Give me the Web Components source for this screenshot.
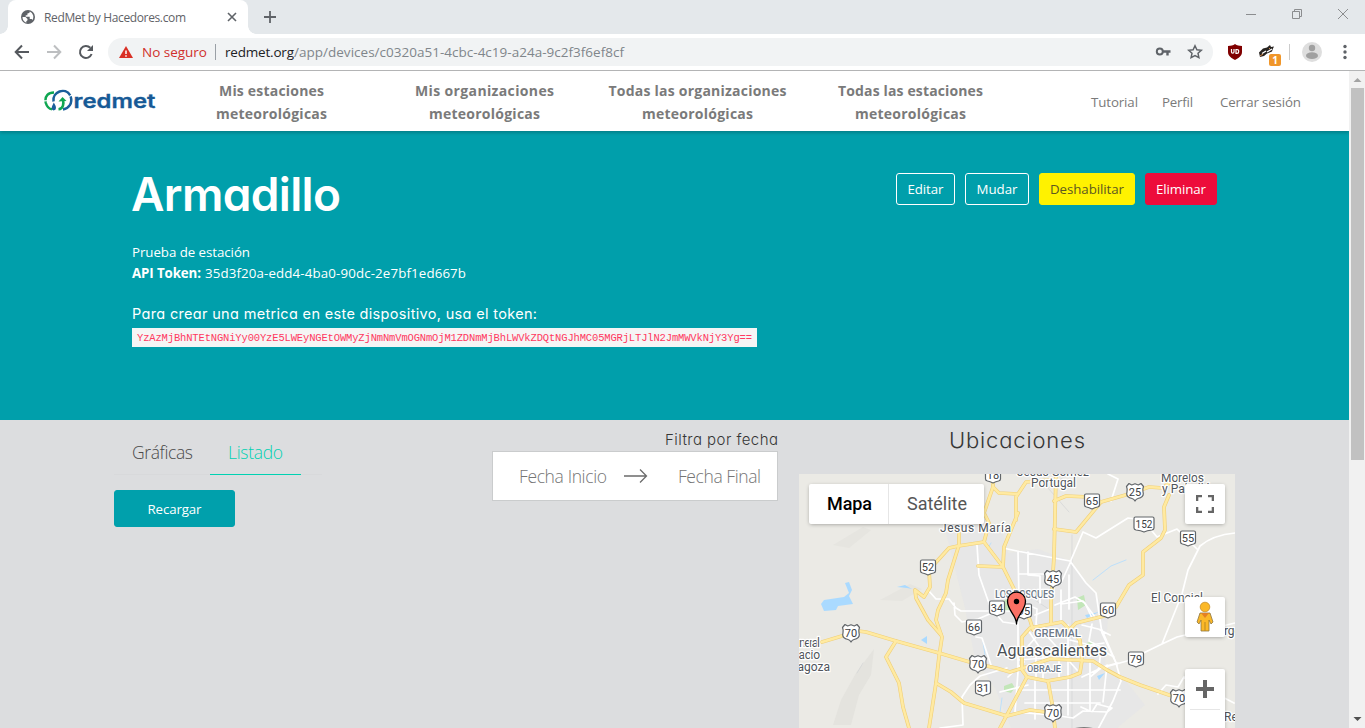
<!DOCTYPE html>
<html lang="es">
<head>
<meta charset="utf-8">
<title>RedMet by Hacedores.com</title>
<style>
html,body{margin:0;height:100%;overflow:hidden}
body{font-family:"Open Sans","Noto Sans",sans-serif}
</style>
</head>
<body>
<browser-window></browser-window>
<script>
function define(name, html, setup){
  const t=document.createElement('template');
  t.innerHTML=html;
  customElements.define(name, class extends HTMLElement{
    constructor(){super();this.attachShadow({mode:'open'}).append(t.content.cloneNode(true));}
    connectedCallback(){ if(setup) setup(this,this.shadowRoot); }
  });
}

define('tab-strip', `<style>
:host{display:flex;height:34px;background:#e4e8eb;align-items:stretch;font-size:12px;color:#5f6368}
.tab{box-sizing:border-box;margin-left:8px;width:240px;background:#fff;border-radius:8px 8px 0 0;display:flex;align-items:center;padding:0 10px 0 12px;gap:8px;position:relative}
.tab::before,.tab::after{content:"";position:absolute;bottom:0;width:8px;height:8px}
.tab::before{left:-8px;background:radial-gradient(circle at 0 0,transparent 7.500px,#fff 8px)}
.tab::after{right:-8px;background:radial-gradient(circle at 100% 0,transparent 7.500px,#fff 8px)}
.tab fit-text{flex:none;margin-right:auto}
.plus{align-self:center;margin-left:15px}
.win{margin-left:auto;display:flex;gap:34px;padding:8px 16px 0 0}
svg{display:block}
</style>
<div class="tab"><svg width="16" height="16" viewBox="0 0 16 16"><circle cx="8" cy="8" r="7" fill="#5f6368"/><path d="M2.5 8h3l2 2v1.2l-1.2 1v1.6A6 6 0 0 1 2.500 8zM9.800 2.500c-.2 1.500-1 1.800-2.400 2v1.700H5.700v1.600h4v2.200h1.400c1 0 1.200.6 1.200 1.300A6 6 0 0 0 9.800 2.500z" fill="#fff"/></svg>
<fit-text w="142">RedMet by Hacedores.com</fit-text>
<svg width="12" height="12" viewBox="0 0 12 12"><path d="M2 2l8 8M10 2l-8 8" stroke="#5f6368" stroke-width="1.6"/></svg></div>
<svg class="plus" width="14" height="14"><path d="M7 1v12M1 7h12" stroke="#5f6368" stroke-width="1.8"/></svg>
<div class="win"><svg width="12" height="12"><path d="M1 6.500h10" stroke="#8b8d8f"/></svg>
<svg width="12" height="12"><path d="M1.500 3.500h7v7h-7zM3.500 3V1.500h7v7H9" stroke="#8b8d8f" fill="none"/></svg>
<svg width="12" height="12"><path d="M1 1l10 10M11 1L1 11" stroke="#8b8d8f"/></svg></div>`);

define('address-bar', `<style>
:host{display:flex;box-sizing:border-box;height:37px;border-bottom:1px solid #b3b4b5;background:#fff;align-items:center;padding:0 12px 0 14px;font-size:13.500px}
svg{display:block;flex:none}
.nav{display:flex;gap:16px;margin-right:14px}
.box{display:flex;align-items:center;width:1105px;height:28px;box-sizing:border-box;border-radius:14px;background:#f1f3f4;padding:0 10px}
.box .w{margin-right:8px}
.red{color:#d0302b}.host{color:#202124}.path{color:#80868b;margin-right:auto}
i{width:1px;height:16px;background:#9aa0a6;margin:0 9px 0 8px}
.tools{display:flex;align-items:center;margin-left:13px}
.tools i{background:#ccc;margin:0 12px 0 9px}
.badge{position:relative}
.badge b{position:absolute;left:11px;top:10px;width:12px;height:12px;border-radius:2px;background:#f0962a;color:#fff;font:bold 10px/12px "Open Sans",sans-serif;text-align:center}
</style>
<div class="nav">
<svg width="16" height="16"><path d="M15 8H2M8 1.500L1.700 8 8 14.500" fill="none" stroke="#55595e" stroke-width="2"/></svg>
<svg width="16" height="16"><path d="M1 8h13M8 1.500L14.300 8 8 14.500" fill="none" stroke="#bdbfc1" stroke-width="2"/></svg>
<svg width="16" height="16"><path d="M13.600 10A6 6 0 1 1 12.300 3.800" fill="none" stroke="#55595e" stroke-width="2"/><path d="M15 1v6H9z" fill="#55595e"/></svg></div>
<div class="box"><svg class="w" width="16" height="16"><path d="M8 2l7 12H1z" fill="#d93025"/><path d="M8 6.500v3.500M8 11.200v1.600" stroke="#fff" stroke-width="1.500"/></svg>
<fit-text class="red" w="65">No seguro</fit-text><i></i><fit-text class="host" w="69">redmet.org</fit-text><fit-text class="path" w="330">/app/devices/c0320a51-4cbc-4c19-a24a-9c2f3f6ef8cf</fit-text>
<svg width="16" height="16" style="margin-right:16px"><circle cx="4.800" cy="7.500" r="3" fill="none" stroke="#5f6368" stroke-width="2"/><path d="M8 7.500h7.500M12.500 7v4.500" stroke="#5f6368" stroke-width="2.400"/></svg>
<svg width="16" height="16"><path d="M8 1.800l1.900 4 4.400.5-3.300 3 .9 4.300L8 11.500l-3.900 2.100.9-4.300-3.300-3 4.400-.5z" fill="none" stroke="#5f6368" stroke-width="1.500"/></svg></div>
<div class="tools"><svg width="18" height="18" style="margin-right:14px"><path d="M9 1c2 1.500 4 1.800 7 2v6c0 4-3.500 6-7 8-3.500-2-7-4-7-8V3c3-.2 5-.5 7-2z" fill="#800000"/><path d="M5.500 6v3q0 1.200 1.200 1.200T8 9V6M10 6.500v3.800h1q1.700 0 1.700-1.900T11 6.500z" fill="none" stroke="#fff" stroke-width="1.200"/></svg>
<div class="badge"><svg width="22" height="16"><path d="M1 8.500l4-4 4-1 3-2.500 1 2 3-.5-1 2-1 3-5 2-3 2.500-4 1z" fill="#272320"/><path d="M4 9.500l4-2.500M9 8l5-3" stroke="#fff" stroke-width="1.400"/><path d="M2 12l3-2M11 5l1-1" stroke="#d38a50"/></svg><b>1</b></div>
<i></i><svg width="20" height="20"><circle cx="10" cy="10" r="10" fill="#dedede"/><circle cx="10" cy="6" r="3.200" fill="#a0a0a0"/><ellipse cx="10" cy="13.700" rx="6" ry="3.400" fill="#a0a0a0"/></svg>
<svg width="4" height="16" style="margin-left:21px"><circle cx="2" cy="2.500" r="1.700" fill="#5f6368"/><circle cx="2" cy="8" r="1.700" fill="#5f6368"/><circle cx="2" cy="13.500" r="1.700" fill="#5f6368"/></svg></div>`);

define('site-logo', `<style>:host{display:block}svg{display:block}text{font:600 19px Inter,sans-serif;font-feature-settings:"cv11"}</style>
<svg width="112" height="24" viewBox="44 89 112 24"><g fill="none" stroke-width="2.500">
<path d="M54 92.500C46.500 92.500 44.500 98 45.800 103 47 107 49.500 109 52 109.300" stroke="#0fa651" stroke-dasharray="13 1.200"/>
<path d="M53.500 101.500C52 91.500 66 86.500 70.500 96 73 103 69 108.500 63 109.500" stroke="#1b5f9b" stroke-dasharray="25 1"/>
<path d="M58.500 109.300C63.500 109 64 103 62.800 99" stroke="#0fa651"/></g>
<path d="M58.500 101.500l4-4.500 4 4z" fill="#0fa651"/><path d="M53.800 102.500q4.500 7-.2 8-4-.5.200-8z" fill="#1b5f9b"/>
<text x="73.500" y="107.800" fill="#175a96" stroke="#175a96" stroke-width=".3" textLength="82" lengthAdjust="spacingAndGlyphs">redmet</text></svg>`);

define('site-nav', `<style>
:host{display:flex;height:60px;background:#fff;align-items:center;position:relative;box-shadow:0 2px 3px rgba(10,10,10,.2);z-index:1;color:#7a7a7a}
site-logo{margin:0 9px 0 44px}
.item{width:213px;text-align:center;font:bold 14px/23px "Open Sans",sans-serif;padding-top:2px}
.item fit-text{margin:auto;display:block}
.end{margin-left:auto;display:flex;font-size:13.300px;padding:2px 48px 0 0}
</style>
<site-logo></site-logo>
<div class="item"><fit-text w="105">Mis estaciones</fit-text><fit-text w="111">meteorológicas</fit-text></div>
<div class="item"><fit-text w="139">Mis organizaciones</fit-text><fit-text w="111">meteorológicas</fit-text></div>
<div class="item"><fit-text w="178">Todas las organizaciones</fit-text><fit-text w="111">meteorológicas</fit-text></div>
<div class="item"><fit-text w="145">Todas las estaciones</fit-text><fit-text w="111">meteorológicas</fit-text></div>
<div class="end"><fit-text w="47" style="margin-right:24px">Tutorial</fit-text><fit-text w="31" style="margin-right:27px">Perfil</fit-text><fit-text w="81">Cerrar sesión</fit-text></div>`);

define('ui-button', `<style>
:host{display:flex;box-sizing:border-box;height:32px;border-radius:3px;border:1px solid #fff;align-items:center;justify-content:center;color:#fff;font-size:13.300px;width:var(--w)}
:host([kind=warning]){background:#fff200;border-color:#fff200;color:#5c5820}
:host([kind=danger]){background:#ed0c3b;border-color:#ed0c3b}
:host([kind=primary]){background:#00a0ac;border-color:#00a0ac;height:37px}
</style><slot></slot>`);

define('station-hero', `<style>
:host{display:flex;box-sizing:border-box;height:289px;background:#009fab;color:#fff;padding:42px 132px 0;justify-content:space-between;align-items:flex-start;font-size:13.300px;line-height:21px}
h1{margin:0 0 25px -1px;font:600 46px/43px Inter,sans-serif;padding-bottom:1px;font-feature-settings:"cv11"}
h2{margin:20px 0 4px;font:400 14.500px/20px Inter,sans-serif;font-feature-settings:"cv11"}
.row{display:flex}
.code{background:#f5f5f5;color:#ff3860;height:19px;width:625px;box-sizing:border-box;padding-left:5px;font:10.500px/20px "Liberation Mono",monospace}
.buttons{display:flex;gap:10px}
</style>
<div><h1><fit-text w="210">Armadillo</fit-text></h1>
<div class="row"><fit-text w="118">Prueba de estación</fit-text></div>
<div class="row"><b><fit-text w="69">API Token:</fit-text></b><fit-text w="261" style="margin-left:4px">35d3f20a-edd4-4ba0-90dc-2e7bf1ed667b</fit-text></div>
<h2><fit-text w="405">Para crear una metrica en este dispositivo, usa el token:</fit-text></h2>
<div class="code"><fit-text w="615">YzAzMjBhNTEtNGNiYy00YzE5LWEyNGEtOWMyZjNmNmVmOGNmOjM1ZDNmMjBhLWVkZDQtNGJhMC05MGRjLTJlN2JmMWVkNjY3Yg==</fit-text></div></div>
<div class="buttons"><ui-button style="--w:59px"><fit-text w="36">Editar</fit-text></ui-button><ui-button style="--w:64px"><fit-text w="41">Mudar</fit-text></ui-button><ui-button kind="warning" style="--w:96px"><fit-text w="74">Deshabilitar</fit-text></ui-button><ui-button kind="danger" style="--w:72px"><fit-text w="50">Eliminar</fit-text></ui-button></div>`);

define('view-tabs', `<style>
:host{display:block;width:208px}
.tabs{display:flex;height:54px;border-bottom:1px solid #d8d9db;font-size:17.500px;line-height:65px;color:#4a4a4a;font-weight:300}
.t{padding:0 18px;height:54px}.on{color:#00d1b2;border-bottom:1px solid #00d1b2}
ui-button{margin-top:15px}
</style><div class="tabs"><div class="t"><fit-text w="61">Gráficas</fit-text></div><div class="t on" style="margin-left:-1px"><fit-text w="55">Listado</fit-text></div></div>
<ui-button kind="primary" style="--w:121px"><fit-text w="54">Recargar</fit-text></ui-button>`);

define('date-filter', `<style>
:host{display:flex;flex-direction:column;align-items:flex-end;width:286px}
.l{font:300 15px/20px Inter,sans-serif;font-feature-settings:"cv11";color:#363636;margin:10px 0 1px}
.box{display:flex;align-items:center;box-sizing:border-box;width:286px;height:50px;border:1px solid #cacccd;background:#fff;padding:0 16px 0 26px;font-size:17.500px;color:#757575;font-weight:300}
</style><div class="l"><fit-text w="113">Filtra por fecha</fit-text></div>
<div class="box"><fit-text w="88">Fecha Inicio</fit-text><svg width="24" height="16" style="margin:0 30px 0 17px"><path d="M0 8h22M16 1.500L22.500 8 16 14.500" fill="none" stroke="#6b6b6b" stroke-width="1.300"/></svg><fit-text w="83">Fecha Final</fit-text></div>`);

define('map-view', `<style>
:host{display:block;position:relative;width:436px;height:254px;overflow:hidden;background:#ebeae5;font-family:Roboto,sans-serif}
svg{display:block}
.c{position:absolute;background:#fff;border-radius:2px;box-shadow:0 1px 4px -1px rgba(0,0,0,.4);display:flex;align-items:center;justify-content:center}
.type{left:10px;top:10px;height:40px;width:175px;font-size:18px;color:#565656;justify-content:flex-start}
.type div{height:40px;display:flex;align-items:center;box-sizing:border-box;padding:0 18px 1px}
.type .a{width:80px;color:#000;font-weight:500;border-right:1px solid #e6e6e6}
.full{left:386px;top:10px;width:40px;height:40px}
.peg{left:386px;top:123px;width:40px;height:40px}
.zoom{left:386px;top:195px;width:40px;height:81px;align-items:flex-start}
.lb text{paint-order:stroke;stroke:#fff;stroke-width:2.500px;stroke-linejoin:round;fill:#50555b;font-size:12px}
.lb .big{font-size:16px;fill:#4a4f55}.lb .d{font-weight:500;fill:#6e7a89;font-size:10.500px}
.sh text{font:11px Roboto,sans-serif;fill:#3c4043;text-anchor:middle}
</style>
<svg width="436" height="254" viewBox="799 474 436 254" fill="none" stroke-linecap="round" stroke-linejoin="round">
<g fill="#e5e6e7"><path d="M946 533l45-10 12 10 5 20 30-4 30 11 28 35 12 20-3 50 20 15 20 25-40 33h-90l-20-50-20-30-10-50z" opacity=".75"/><path d="M856 673l18-24-3 26-12 20-8 30h-18l8-25z" fill="#e4e3de"/><path d="M833 545l30-18 8 3-22 18zM880 600l30-16 12 5-20 12z" fill="#e6e5e0"/></g>
<path d="M1068 474l-20 14 21 24M1072 535v200M1035 600l15 10M857 673l6-10" stroke="#d3d4d5" stroke-width=".7"/>
<g fill="#aadaff"><path d="M821 604l3-4 20-3 5-4-4-10 4-1 3 8-3 6 4 8-15 2-2 4-12 1zM897 587l8-2 7 4-5-1zM921 640l6-4v8zM1085 615l14-3-12 6zM1097 676l8-3-6 7z"/></g><path d="M1093 580l18-14 15-6M991 543l-3 5M1000 712l2-14M985 655l-2-13" stroke="#bde0fb"/>
<g fill="#c2e6b8"><path d="M1077 598l7-3 2 10-8 5zM1084 644l8-3 3 4-8 1zM1004 686l8-3 3 5-4 5-7-2zM1003 601l6-3v13h-5z"/></g>
<g stroke="#fff" stroke-width="1.700">
<path d="M977 545l2 30 12 34 12 2h14M928 590l8 9 13 0 7 9 5 3h47M954 603l1 12 7 7 16-3 14-6 5 2 6 7 14 2M976 637l6 1 10 30M940 728l23-3-1-28 8-12 10-9 27-8M1003 548l14 3 53 10 16 22 10 10 6 40 14 30 5 18-8 20-16 30M1071 560l12-28 13 6 32-20 15 2 14 17 20-8 20 20M1235 533q-22 2-35 13M1200 546l-12 24-6 24-20 50-35 17-29 8M1162 644l15-7 58-14M1158 694l8-9 12 2 6-10 50 26M1108 474l10 5-7 22M1061 583l10-22M1018 551l1 50 18 8-1 16M1028 552v23l12 1v27M1019 574h34l1 20M1061 604l22-3 12 16M1018 622v50l-3 40 38 3 20 3 10-7 24 1 5-4-15-4-5 8-11-5"/>
<path d="M1037 625l18 20 22 25M1028 630l20 30M1035 681v38M1044 628l-22 25M1022 690h98M1025 703h75M1068 625v90M1090 660v50M1107 665l-4 37M1070 640l20 5 14-2M1068 648l24-3 22 12M1082 625l20 5 15 35M1092 624l-3 17 12 6-2 22-17 8M1100 630l10 5M1090 677l12-10 16-4M1018 660l40-3M1025 650l50 4M1008 677l16-15M1000 692l28-7M1061 590v30M1069 575v34M1055 605l20-8 10 6 8 17M1036 650v29M1043 650v29M1059 660v17M1050 609l-15 6"/></g>
<g id="roads"></g>
<g class="lb"><text x="1017" y="475.500" textLength="72">Jesús Gómez</text><text x="1031" y="487" textLength="45">Portugal</text><text x="1161" y="481.500" textLength="43">Morelos</text><text x="1162" y="493">y Pabellón</text><text x="940" y="531.500" textLength="71">Jesús María</text><text x="1151" y="601.500" textLength="52">El Conejal</text><text x="787" y="647" textLength="33">General</text><text x="783" y="659" textLength="37">Ignacio</text><text x="780" y="671">Zaragoza</text><text x="1199" y="634.500">Amargo</text><text x="1224" y="721">Rey</text>
<text class="d" x="995" y="598" textLength="59" style="font-size:10px">LOS BOSQUES</text><text class="d" x="1034" y="637" textLength="47" style="font-size:11.500px">GREMIAL</text><text class="d" x="1027" y="671.500" textLength="34" lengthAdjust="spacingAndGlyphs" style="font-size:9.500px">OBRAJE</text><text class="big" x="997" y="656" textLength="110">Aguascalientes</text></g>
<g class="sh"></g>
<path d="M1016.500 624c0-9-9-13-9-23a9 9 0 0 1 18 0c0 10-9 14-9 23z" fill="#fb7064" stroke="#000" stroke-width="1.300"/><circle cx="1016.500" cy="601.500" r="2.700" fill="#000"/>
<path d="M1075 728q9-1.500 18 0z" fill="#555"/>
</svg>
<div class="c type"><div class="a"><fit-text w="45">Mapa</fit-text></div><div><fit-text w="60">Satélite</fit-text></div></div>
<div class="c full"><svg width="18" height="18"><path d="M1 6V1H6M12 1h5V6M17 12v5H12M6 17H1V12" fill="none" stroke="#666" stroke-width="2.600" stroke-linecap="butt"/></svg></div>
<div class="c peg"><svg width="18" height="32" viewBox="0 0 18 32"><path d="M4 12h10l3 9-2 2-2-4v11H5V19l-2 4-2-2z" fill="#fbb827" stroke="#8d7643" stroke-width=".8"/><circle cx="9" cy="6" r="4.800" fill="#fbb827" stroke="#c68e29" stroke-width=".8"/><path d="M5 12h8l-4 5z" fill="#e48123"/><path d="M9 21v9" stroke="#b98924"/></svg></div>
<div class="c zoom"><svg width="30" height="43"><path d="M15 11v18M6 20h18" stroke="#666" stroke-width="4"/><path d="M0 40.500h30" stroke="#e6e6e6"/></svg></div>`, (el,r)=>{
  const roads=[
  "M822 642l30-9M858 631l8 1 30 9 43 12 34 10 23 5 14 4 13-4 27-9 23 1 20 1 14 9 13 7 20 8 29 10 10 3",
  "M959 533v12l-11 35-2 13-8 17-2 10 6 17-3 20-3 26-7 45",
  "M984 542l-26 4-9 2-20 22 1 17-6 10-9-7 1 8 12 22 13 15",
  "M896 641l-10 16 13 26 4 24 6 21",
  "M936 683l15 9 13 11 43 13 23-6 23 3",
  "M993 474v13l-9 26 5 10-5 19 19 25 5 10 8 16 14 27 3 10",
  "M993 487l6 6 19 1M1018 513l-14 34-1 20-25-1M1016 520v-23l10-15 23-2",
  "M1056 474l-2 83-3 46v20","M1054 501l12-5 23 1 12 5 28-8 20-7 14 1 13-11","M1054 529l22 3 25-30",
  "M1169 495l-5 12 1 23-4 8-18 14v23l-14 10-13 22-8 8-32 8-8 8",
  "M1022 637l8-9 32-6 6 6 12 12 2 20-2 13-10 4-23 4-20-4-5-7z",
  "M1000 728l27-51","M1048 681l4 22 3 25"];
  const g=r.getElementById('roads');
  g.innerHTML=[['#f0cf78',3.7],['#ffeaa1',2.5]].map(([c,w])=>roads.map(d=>`<path d="${d}" stroke="${c}" stroke-width="${w}"/>`).join('')).join('');
  const box=[[18,993,475],[65,1092,501],[152,1144,524],[55,1188,538],[52,928,567],[34,997,608],[60,1108,610],[95,1024,611],[66,974,627],[79,1136,659],[31,983,688]];
  const us=[[25,1135,492],[45,1053,579],[70,851,633],[70,978,664],[70,1179,698],[70,1053,713]];
  const draw=(n,x,y,d)=>`<g transform="translate(${x} ${y})"><path d="${d}" fill="#fff" stroke="#62666a" stroke-width="1.200"/><text y="4"${n>99?' style="font-size:10px"':''}>${n}</text></g>`;
  r.querySelector('.sh').innerHTML=box.map(([n,x,y])=>{const w=n>99?10:7.500;return draw(n,x,y,`M${-w} -5.500q0-1.500 1.500-1.500H${w-1.500}q1.500 0 1.500 1.500V4q0 1.500-2 2C3 6.500 2 7 0 8-2 7-3 6.500 ${2-w} 6q-2-.5-2-2z`)}).join('')
  +us.map(([n,x,y])=>draw(n,x,y,"M-6-8.500L-3.300-7 0-8.300 3.300-7 6-8.500 8.500-5.500C7-2 8-1 8.300 1.500 8.500 5 5 6 3 6.500 1 7 .5 8 0 9-.5 8-1 7-3 6.500-5 6-8.500 5-8.300 1.500-8-1-7-2-8.500-5.500z")).join('');
});

define('station-body', `<style>
:host{display:flex;flex:1;background:#dcdddf;padding-left:114px}
date-filter{margin-left:170px}
.loc{margin-left:21px;width:436px}
.loc h3{margin:8px 0 22px;font:300 22px/24px Inter,sans-serif;font-feature-settings:"cv11";color:#363636;text-align:center}
</style><view-tabs></view-tabs><date-filter></date-filter><div class="loc"><h3><fit-text w="136">Ubicaciones</fit-text></h3><map-view></map-view></div>`);

define('scroll-bar', `<style>:host{display:flex;flex-direction:column;width:16px;background:#f1f1f1;align-items:center}
.th{width:13px;height:372px;background:#c1c1c1;margin-left:1px}svg{display:block}.dn{margin-top:auto}</style>
<svg width="16" height="17"><path d="M4.500 11L8.500 7l4 4z" fill="#a3a3a3"/></svg><div class="th"></div><svg class="dn" width="16" height="17"><path d="M4.500 6l4 4 4-4z" fill="#505050"/></svg>`);

define('browser-window', `<style>
:host{display:flex;flex-direction:column;width:1365px;height:728px;overflow:hidden}
.view{display:flex;flex:1;min-height:0}.page{display:flex;flex-direction:column;width:1349px;overflow:hidden}
tab-strip,address-bar,site-nav,station-hero{flex:none}
</style><tab-strip></tab-strip><address-bar></address-bar>
<div class="view"><div class="page"><site-nav></site-nav><station-hero></station-hero><station-body></station-body></div><scroll-bar></scroll-bar></div>`);

/* Text run tracked to an exact advance width */
define('fit-text', `<style>:host{display:inline-block;white-space:nowrap;text-align:left}span{display:inline-block}</style><span><slot></slot></span>`, (el,r)=>{
  const w=+el.getAttribute('w'), s=r.querySelector('span'), n=el.textContent.length;
  el.style.width=w+'px';
  s.style.letterSpacing='0px';
  const k=(w-s.getBoundingClientRect().width)/(n-1);
  s.style.letterSpacing=k+'px';
  s.style.marginRight=-k-2+'px';
});
</script>
</body>
</html>
